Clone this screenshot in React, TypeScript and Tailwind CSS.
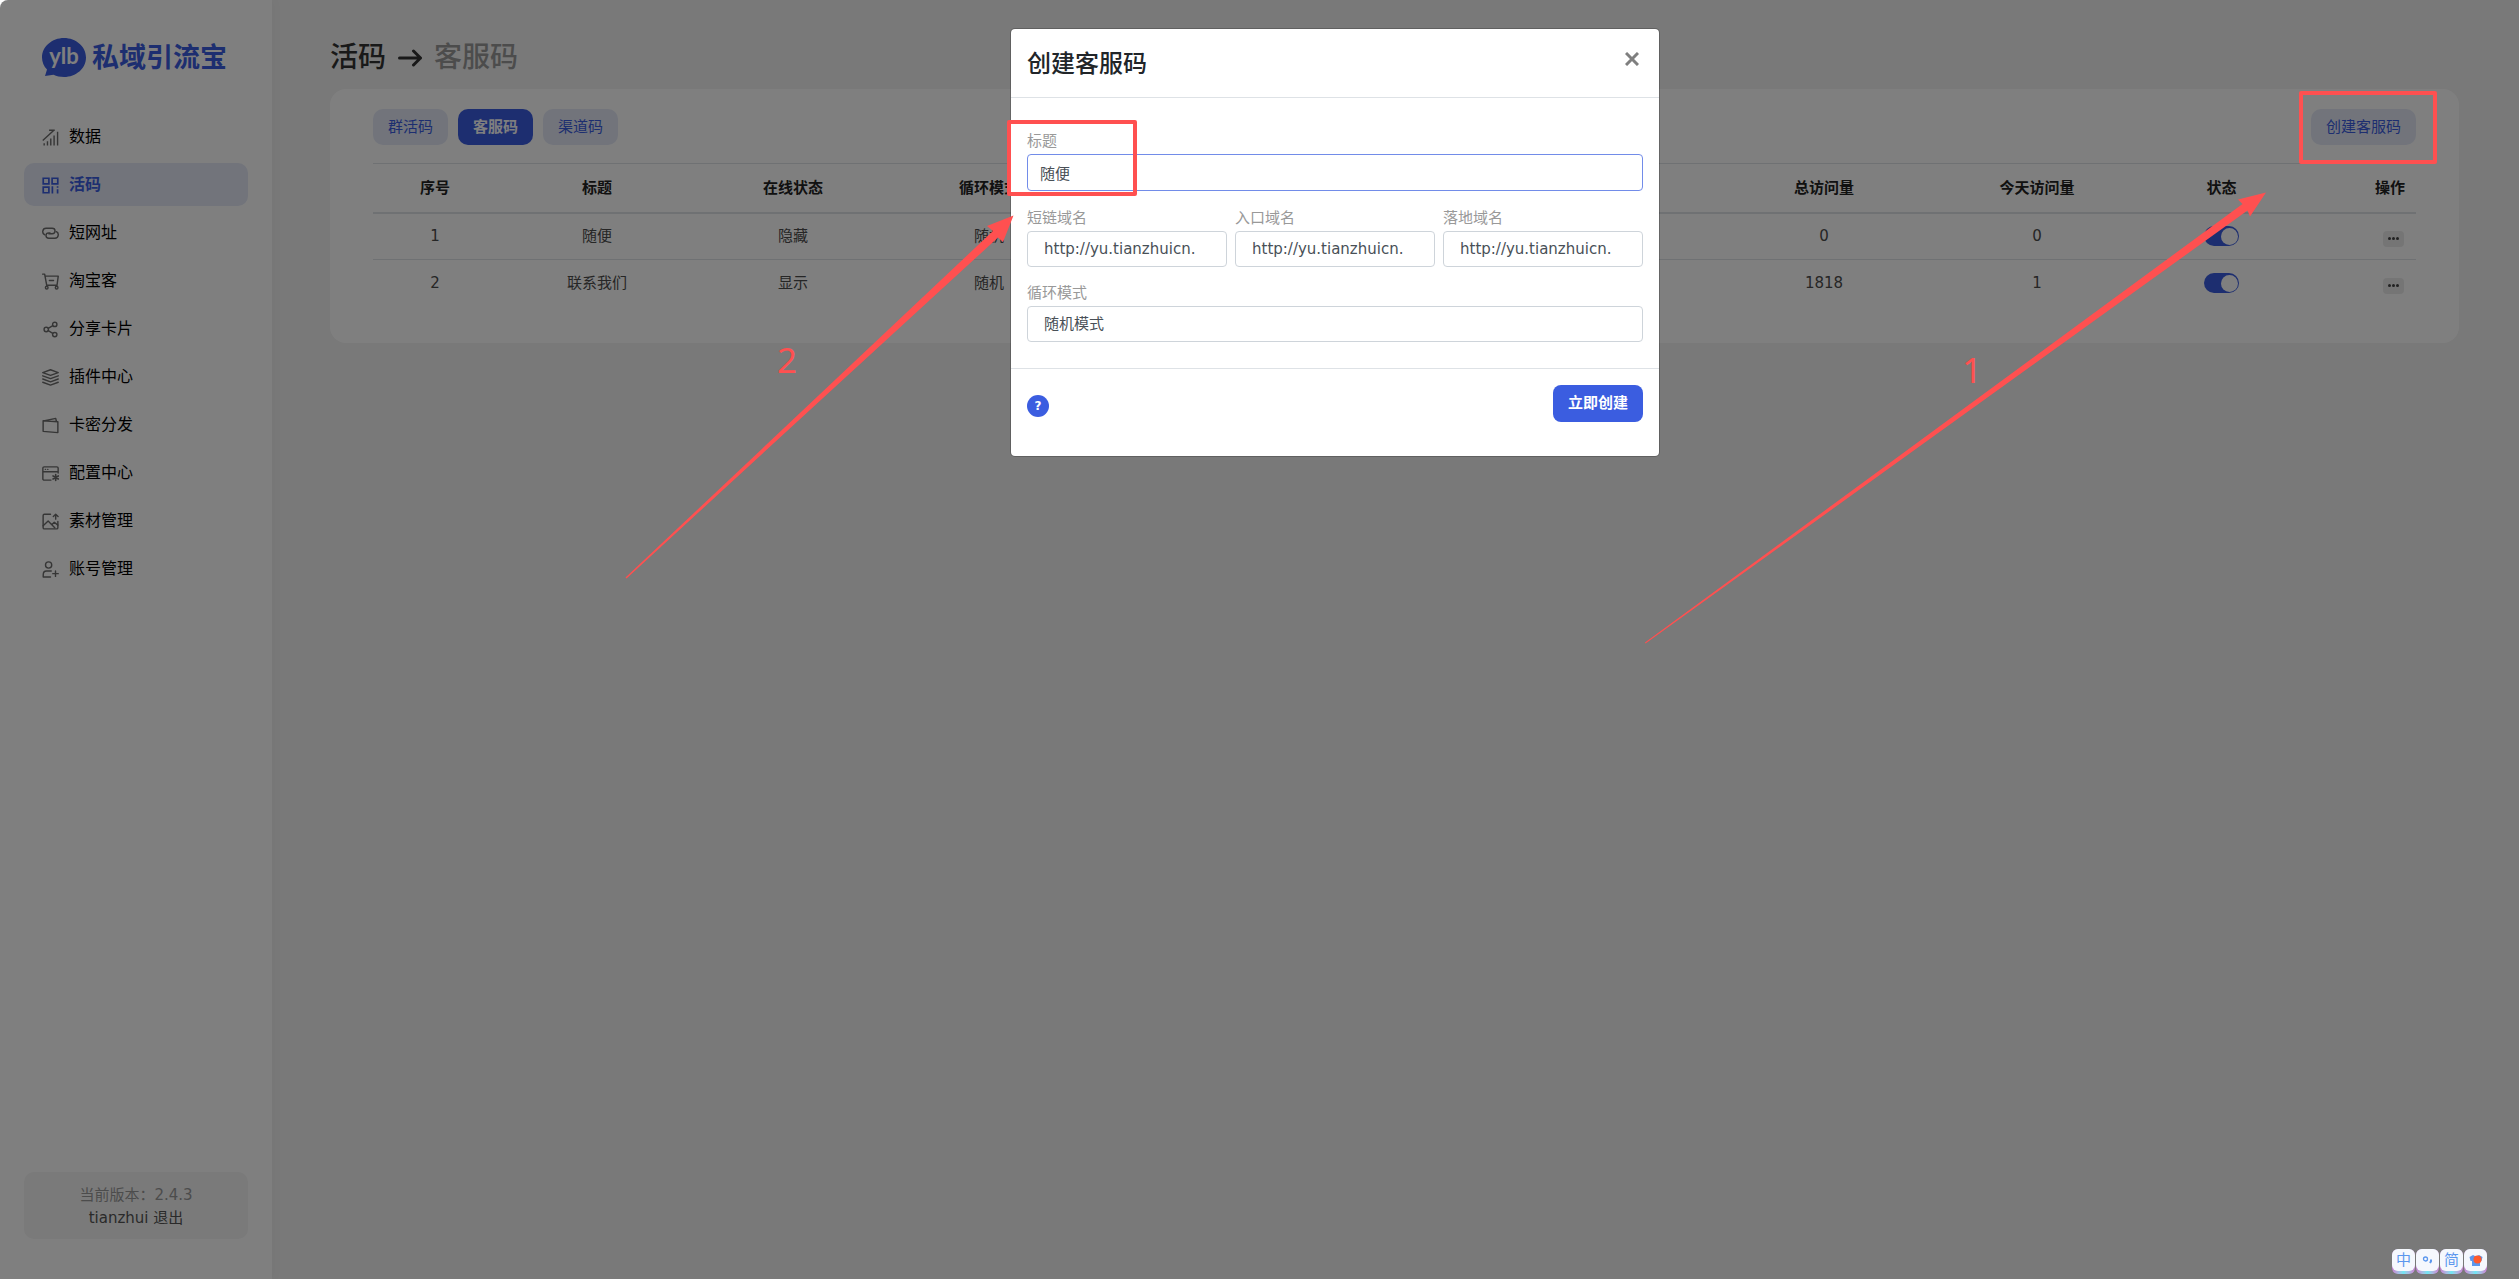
import React, { useState } from "react";

const iconProps = {
	viewBox: "0 0 18 18",
	fill: "none",
	stroke: "currentColor",
	strokeWidth: 1.5,
	strokeLinecap: "round" as const,
	strokeLinejoin: "round" as const,
	className: "w-[17px] h-[17px] shrink-0",
	"aria-hidden": true,
};

const menu = [
	{
		name: "数据",
		icon: (
			<svg {...iconProps} strokeLinecap="butt">
				<path d="M.8 12.200 12.300 1.500M7.500 1.300h6M2.300 15v2.500M5.800 13v4.500M9.300 10v7.500M12.800 7v10.500M16.500 3v14.500" />
			</svg>
		),
	},
	{
		name: "活码",
		icon: (
			<svg {...iconProps} strokeWidth={1.8} strokeLinecap="butt" strokeLinejoin="miter">
				<path d="M1.300 1.300h6v6h-6zM10.700 1.300h6v6h-6zM1.300 10.700h6v6h-6zM11 9.800v7.700M16.500 9.800v1.700M16.500 13v4.500" />
			</svg>
		),
	},
	{
		name: "短网址",
		icon: (
			<svg {...iconProps}>
				<path d="M2.800 10.300C-.3 9 .2 3.500 4.300 3.500h6.500c4 0 4 5.700 0 5.700H7.200" />
				<path d="M15.200 7c3.100 1.300 2.600 7-1.500 7h-6.500c-4 0-4-5.700 0-5.700h1.300" />
			</svg>
		),
	},
	{
		name: "淘宝客",
		icon: (
			<svg {...iconProps}>
				<path d="M.7 1.200h2.100L5 13h11M3.300 3.300h13.900L15.900 13M7.800 8h4.400" />
				<circle cx="5" cy="15.500" r="1.400" />
				<circle cx="15.500" cy="15.500" r="1.400" />
			</svg>
		),
	},
	{
		name: "分享卡片",
		icon: (
			<svg {...iconProps}>
				<circle cx="4.500" cy="9" r="2.300" />
				<circle cx="13.500" cy="3.600" r="2.300" />
				<circle cx="13.500" cy="14.400" r="2.300" />
				<path d="m6.600 7.800 4.800-3M6.600 10.200l4.800 3" />
			</svg>
		),
	},
	{
		name: "插件中心",
		icon: (
			<svg {...iconProps}>
				<path d="m9 .8 8.200 3L9 6.800l-8.200-3zM.8 7.200 9 10.200l8.200-3M.8 10.600l8.200 3 8.200-3M.8 14l8.200 3 8.200-3" />
			</svg>
		),
	},
	{
		name: "卡密分发",
		icon: (
			<svg {...iconProps}>
				<path d="M1.200 4 16.800 5v11.500l-15.600-1.300zM3 4l11.500-2.500.8 3.200" />
			</svg>
		),
	},
	{
		name: "配置中心",
		icon: (
			<svg {...iconProps}>
				<path d="M9.500 16H2.300C1.500 16 .9 15.500.9 14.700V3.300C.9 2.500 1.500 2 2.300 2h13.400c.8 0 1.400.5 1.400 1.300v5.200M.9 7.200h16.200M3.500 4.600h.3M6 4.600h.3" />
				<path d="M14.500 10v6.400M11.700 11.600l5.600 3.200M17.300 11.600l-5.600 3.200" strokeWidth="1.700" />
			</svg>
		),
	},
	{
		name: "素材管理",
		icon: (
			<svg {...iconProps}>
				<path d="M9 1.300H2.500c-.8 0-1.300.5-1.300 1.300v12.900c0 .8.500 1.300 1.300 1.300h13c.8 0 1.300-.5 1.300-1.300V9" />
				<path d="m1.200 13.500 5.300-5 7 7M10.500 12.300l2.500-2.500 3.800 3M14.500 6.500V1.500M12 3.700l2.500-2.500L17 3.700" />
			</svg>
		),
	},
	{
		name: "账号管理",
		icon: (
			<svg {...iconProps}>
				<circle cx="7" cy="4.200" r="3.300" />
				<path d="M9 17H1.300v-2.500c0-2.500 1.500-3.900 3.500-3.900h5M14.300 10.500v5.800M11.400 13.400h5.800" />
			</svg>
		),
	},
];

const tabs = ["群活码", "客服码", "渠道码"];

const rows = [
	{ id: 1, title: "随便", online: "隐藏", mode: "随机", total: 0, today: 0 },
	{ id: 2, title: "联系我们", online: "显示", mode: "随机", total: 1818, today: 1 },
];

const domains = [
	{ id: "short", label: "短链域名" },
	{ id: "entry", label: "入口域名" },
	{ id: "landing", label: "落地域名" },
];

function Sidebar() {
	return (
		<aside className="flex w-[272px] shrink-0 flex-col bg-white px-6 shadow-[0_0_12px_rgba(0,0,0,0.04)]">
			<div className="mt-[38px] ml-[18px] flex h-10 items-center gap-[6px] text-[#3b5de0]">
				<svg viewBox="0 0 44 40" className="h-10 w-11 shrink-0" aria-hidden="true">
					<path
						d="M22 0C34 0 44 8.500 44 19.500S34 39 22 39c-4 0-7.500-1-10.500-2.300L3 38l2-6.500C1.800 28.300 0 24 0 19.500 0 8.500 10 0 22 0z"
						fill="currentColor"
					/>
					<text x="22" y="26" textAnchor="middle" fontSize="22" fontWeight="700" fill="#fff" fontFamily="Lato, sans-serif">
						ylb
					</text>
				</svg>
				<span className="whitespace-nowrap text-[27px] leading-[40px] font-bold">私域引流宝</span>
			</div>
			<nav className="mt-[37px] flex flex-col gap-[5px]">
				{menu.map((item) => (
					<a
						key={item.name}
						href="#"
						className={
							item.name === "活码"
								? "flex h-[43px] items-center gap-[10px] rounded-[10px] bg-[#e4e9f7] pt-px pl-[18px] text-base font-bold text-[#3b5de0]"
								: "flex h-[43px] items-center gap-[10px] rounded-[10px] pt-px pl-[18px] text-base text-black"
						}
					>
						<span className={item.name === "活码" ? "" : "text-[#6c6c6c]"}>{item.icon}</span>
						{item.name}
					</a>
				))}
			</nav>
			<div className="mt-auto mb-10 rounded-[10px] bg-[#f4f4f4] pt-3 pb-[9px] text-center text-[15px] leading-[23px] text-[#999]">
				<p>当前版本：2.4.3</p>
				<p className="text-[#555]">
					tianzhui <a href="#">退出</a>
				</p>
			</div>
		</aside>
	);
}

function CodeTable() {
	return (
		<table className="mt-[18px] w-full table-fixed border-t border-[#dee2e6] text-center text-[15px] leading-[22px] text-[#4c4c4c]">
			<colgroup>
				<col className="w-[124px]" />
				<col className="w-[200px]" />
				<col className="w-[192px]" />
				<col className="w-[200px]" />
				<col />
				<col className="w-[212px]" />
				<col className="w-[214px]" />
				<col className="w-[155px]" />
				<col className="w-[117px]" />
			</colgroup>
			<thead>
				<tr className="h-[49px] border-b-2 border-[#dee2e6] text-[#222]">
					<th>序号</th>
					<th>标题</th>
					<th>在线状态</th>
					<th>循环模式</th>
					<td></td>
					<th>总访问量</th>
					<th>今天访问量</th>
					<th>状态</th>
					<th className="pr-[11px] text-right">操作</th>
				</tr>
			</thead>
			<tbody>
				{rows.map((row) => (
					<tr key={row.id} className="h-[47px] border-b border-[#dee2e6] last:border-b-0">
						<td>{row.id}</td>
						<td>{row.title}</td>
						<td>{row.online}</td>
						<td>{row.mode}</td>
						<td></td>
						<td>{row.total}</td>
						<td>{row.today}</td>
						<td>
							<label className="flex justify-center">
								<input type="checkbox" defaultChecked aria-label={`${row.title} 状态`} className="peer sr-only" />
								<span className="flex h-5 w-[35px] items-center rounded-full bg-[#ccc] px-px peer-checked:justify-end peer-checked:bg-[#3b5de0]">
									<span className="h-[17px] w-[17px] rounded-full bg-white"></span>
								</span>
							</label>
						</td>
						<td className="pr-3 text-right">
							<button
								type="button"
								aria-label="更多"
								className="mt-1 inline-flex h-4 w-[21px] items-center justify-center gap-px rounded bg-[#ebebeb] align-middle"
							>
								<span className="h-[3px] w-[3px] rounded-full bg-[#444]"></span>
								<span className="h-[3px] w-[3px] rounded-full bg-[#444]"></span>
								<span className="h-[3px] w-[3px] rounded-full bg-[#444]"></span>
							</button>
						</td>
					</tr>
				))}
			</tbody>
		</table>
	);
}

function CreateModal() {
	const [title, setTitle] = useState("随便");

	return (
		<div
			role="dialog"
			aria-labelledby="modal-title"
			className="w-[650px] rounded-[5px] border border-black/20 bg-white bg-clip-padding text-[15px]"
		>
			<div className="flex h-[69px] justify-between border-b border-[#dee2e6] px-4 pt-4">
				<h2 id="modal-title" className="text-2xl leading-[38px] font-medium text-[#212529]">
					创建客服码
				</h2>
				<button type="button" aria-label="关闭" className="flex h-[27px] w-[22px] items-center justify-center text-[#7f7f7f]">
					<svg viewBox="0 0 14 14" className="h-[14px] w-[14px]" stroke="currentColor" strokeWidth="3" aria-hidden="true">
						<path d="m1 1 12 12M13 1 1 13" />
					</svg>
				</button>
			</div>
			<form className="px-4 pt-[31px] pb-[26px]">
				<label htmlFor="title" className="block leading-[25px] text-[#999]">
					标题
				</label>
				<input
					id="title"
					type="text"
					value={title}
					onChange={(e) => setTitle(e.target.value)}
					className="block h-[37px] w-full rounded border border-[#728ce9] px-3 text-[#495057] outline-none"
				/>
				<div className="mt-[15px] grid grid-cols-3 gap-2">
					{domains.map((item) => (
						<div key={item.id}>
							<label htmlFor={item.id} className="block leading-[25px] text-[#999]">
								{item.label}
							</label>
							<select
								id={item.id}
								className="block h-9 w-full appearance-none rounded border border-[#ced4da] bg-white px-4 text-[#495057]"
							>
								<option>http://yu.tianzhuicn.</option>
							</select>
						</div>
					))}
				</div>
				<label htmlFor="mode" className="mt-[14px] block leading-[25px] text-[#999]">
					循环模式
				</label>
				<select
					id="mode"
					className="block h-9 w-full appearance-none rounded border border-[#ced4da] bg-white px-4 text-[#495057]"
				>
					<option>随机模式</option>
				</select>
			</form>
			<div className="flex h-[88px] items-start justify-between border-t border-[#dee2e6] px-4 pt-4">
				<button
					type="button"
					aria-label="帮助"
					className="mt-[10px] h-[22px] w-[22px] rounded-full bg-[#3b5de0] text-xs leading-[22px] font-bold text-white"
				>
					?
				</button>
				<button type="button" className="h-[37px] rounded-lg bg-[#3b5de0] px-[15px] font-bold text-white">
					立即创建
				</button>
			</div>
		</div>
	);
}

// red boxes and arrows of the walkthrough
function Guide() {
	return (
		<svg
			viewBox="0 0 2519 1279"
			preserveAspectRatio="xMinYMin meet"
			className="pointer-events-none absolute inset-0 h-full w-full"
			fill="#ff5050"
		>
			<g fill="none" stroke="#ff5050" strokeWidth="4" strokeLinejoin="round">
				<rect x="1009" y="122" width="126" height="72" />
				<rect x="2301" y="93" width="134" height="69" />
			</g>
			<path d="M625.500 577.500 993 231 987 226 1013.500 215.500 1003 242 998 237.500 626.500 578.500z" />
			<path d="M1645 642.500 2242.500 204 2238 199.500 2266 192.500 2250 216.500 2247.500 210.500 1645.500 643.500z" />
			<text x="777" y="373" fontSize="35" fontFamily="Noto Sans, sans-serif">
				2
			</text>
			<text x="1962" y="383" fontSize="35" fontFamily="Noto Sans, sans-serif">
				1
			</text>
		</svg>
	);
}

function ImeBar() {
	const keyClass =
		"flex h-[25px] w-[23px] rounded-[6px] bg-linear-to-r from-[#c77fd0] via-[#6fe6f2] to-[#c77fd0] pb-[3px] text-[#5b97ee]";
	const faceClass = "flex w-full items-center justify-center rounded-[6px] bg-[#f5f8fd] text-[15px] leading-none";

	return (
		<div className="absolute right-8 bottom-[5px] flex gap-px">
			<button type="button" className={keyClass}>
				<span className={faceClass}>中</span>
			</button>
			<button type="button" aria-label="标点" className={keyClass}>
				<span className={faceClass}>
					<svg viewBox="0 0 12 12" className="h-3 w-3" fill="none" stroke="currentColor" strokeWidth="1.300">
						<circle cx="3.500" cy="5" r="2" />
						<path d="M9 5.500v1.800L8 9" strokeWidth="2" />
					</svg>
				</span>
			</button>
			<button type="button" className={keyClass}>
				<span className={faceClass}>简</span>
			</button>
			<button type="button" aria-label="皮肤" className={keyClass}>
				<span className={faceClass}>
					<svg viewBox="0 0 14 12" className="h-3 w-[14px]">
						<path d="M4 1 .5 3l1 4H3v5h8V7h1.500l1-4L10 1 7 2.500z" fill="currentColor" />
						<circle cx="8.500" cy="5.500" r="4" fill="#ff5a2c" />
					</svg>
				</span>
			</button>
		</div>
	);
}

export default function App() {
	return (
		<div className="bg-white font-['DejaVu_Sans','Noto_Sans_CJK_SC',sans-serif]">
			<div className="relative flex min-h-screen overflow-hidden rounded-tl-lg bg-[#f2f2f2]">
				<Sidebar />
				<main className="min-w-0 flex-1 pt-[37px] pr-[60px] pl-[58px]">
					<h1 className="flex items-center text-[28px] leading-[42px] font-medium text-[#333]">
						活码
						<svg
							viewBox="0 0 24 18"
							className="mr-3 ml-3 h-[18px] w-6"
							fill="none"
							stroke="currentColor"
							strokeWidth="3"
							strokeLinecap="round"
							strokeLinejoin="round"
							aria-hidden="true"
						>
							<path d="M1.500 9h21M15.500 2l7 7-7 7" />
						</svg>
						<span className="text-[#999]">客服码</span>
					</h1>
					<section className="mt-[10px] rounded-2xl bg-white px-[43px] pt-5 pb-9">
						<div className="flex justify-between text-[15px]">
							<div className="flex gap-[10px]">
								{tabs.map((tab) => (
									<button
										key={tab}
										type="button"
										className={
											tab === "客服码"
												? "h-9 rounded-[10px] bg-[#3b5de0] px-[15px] font-bold text-white"
												: "h-9 rounded-[10px] bg-[#e4e9f7] px-[15px] text-[#3b5de0]"
										}
									>
										{tab}
									</button>
								))}
							</div>
							<button type="button" className="h-9 rounded-[10px] bg-[#e4e9f7] px-[15px] text-[#3b5de0]">
								创建客服码
							</button>
						</div>
						<CodeTable />
					</section>
				</main>
				<div className="absolute inset-0 flex items-start justify-center bg-black/50 pt-7 pl-[151px]">
					<CreateModal />
				</div>
				<Guide />
				<ImeBar />
			</div>
		</div>
	);
}
